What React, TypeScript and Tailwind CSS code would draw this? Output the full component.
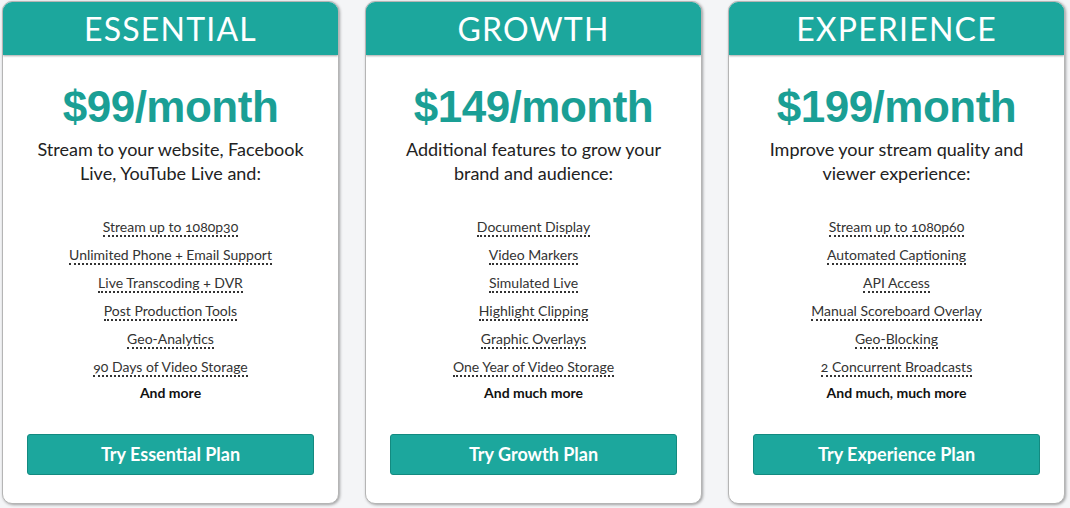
import React from "react";

type Plan = {
  name: string;
  price: string;
  desc: string[];
  features: string[];
  more: string;
  cta: string;
};

const plans: Plan[] = [
  {
    name: "ESSENTIAL",
    price: "$99/month",
    desc: ["Stream to your website, Facebook", "Live, YouTube Live and:"],
    features: [
      "Stream up to 1080p30",
      "Unlimited Phone + Email Support",
      "Live Transcoding + DVR",
      "Post Production Tools",
      "Geo-Analytics",
      "90 Days of Video Storage",
    ],
    more: "And more",
    cta: "Try Essential Plan",
  },
  {
    name: "GROWTH",
    price: "$149/month",
    desc: ["Additional features to grow your", "brand and audience:"],
    features: [
      "Document Display",
      "Video Markers",
      "Simulated Live",
      "Highlight Clipping",
      "Graphic Overlays",
      "One Year of Video Storage",
    ],
    more: "And much more",
    cta: "Try Growth Plan",
  },
  {
    name: "EXPERIENCE",
    price: "$199/month",
    desc: ["Improve your stream quality and", "viewer experience:"],
    features: [
      "Stream up to 1080p60",
      "Automated Captioning",
      "API Access",
      "Manual Scoreboard Overlay",
      "Geo-Blocking",
      "2 Concurrent Broadcasts",
    ],
    more: "And much, much more",
    cta: "Try Experience Plan",
  },
];

function Card({ plan }: { plan: Plan }) {
  return (
    <div className="w-[337px] h-[503px] flex flex-col items-center bg-white rounded-[10px] border border-[#b5b5b5] shadow-[1px_1px_3px_rgba(0,0,0,0.35)] overflow-hidden">
      <div className="w-full h-[53px] shrink-0 bg-[#1ca79d] flex items-center justify-center shadow-[0_1px_2px_rgba(0,0,0,0.35)]">
        <span className="text-white text-[32px] font-normal tracking-[1.2px] leading-none font-['Lato','Open_Sans',sans-serif]">
          {plan.name}
        </span>
      </div>
      <div className="mt-[29px] text-[44px] leading-[46px] font-bold text-[#1a9f95] tracking-[-0.5px] font-['Liberation_Sans',Arial,sans-serif]">
        {plan.price}
      </div>
      <div className="mt-[7px] text-[18px] leading-[24px] text-[#222] text-center font-['Lato','Open_Sans',sans-serif]">
        {plan.desc.map((d) => (
          <div key={d}>{d}</div>
        ))}
      </div>
      <div className="mt-[28px] flex flex-col items-center font-['Lato','Open_Sans',sans-serif] text-[14px] text-[#333] oldstyle-nums">
        {plan.features.map((f) => (
          <div key={f} className="h-[28px] flex items-center">
            <span className="leading-[17px] border-b-2 border-dotted border-[#333]">{f}</span>
          </div>
        ))}
        <div className="h-[22px] flex items-center font-bold text-[14px] text-[#111]">{plan.more}</div>
      </div>
      <button className="mt-[31px] w-[287px] h-[41px] bg-[#1ca79d] border border-[#138a80] rounded-[3px] text-white text-[18px] font-bold font-['Lato','Open_Sans',sans-serif]">
        {plan.cta}
      </button>
    </div>
  );
}

export default function App() {
  return (
    <div className="w-[1070px] h-[508px] bg-[#f4f5f7] pl-[2px] pt-[1px] flex gap-[26px]">
      {plans.map((p) => (
        <Card key={p.name} plan={p} />
      ))}
    </div>
  );
}
